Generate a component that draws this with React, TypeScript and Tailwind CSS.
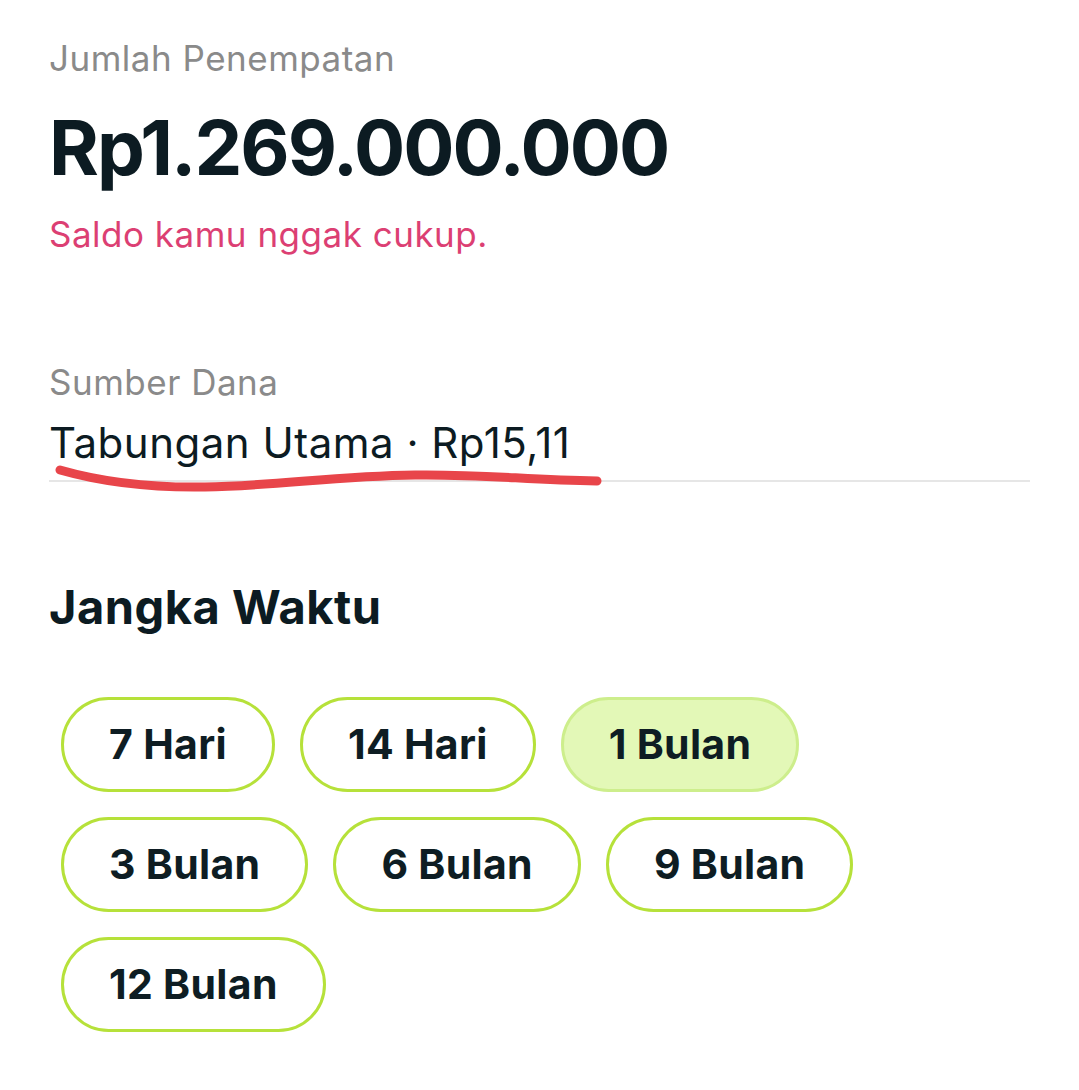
const durations = ['7 Hari', '14 Hari', '1 Bulan', '3 Bulan', '6 Bulan', '9 Bulan', '12 Bulan'];

const Pill = ({ label, active }: { label: string; active?: boolean }) => (
	<button
		className={
			active
				? 'h-[95px] rounded-full border-[3px] border-[#cdee8c] bg-[#e3f8b7] px-[45px] text-[41px] font-bold tracking-[0.3px] text-[#0e1d23]'
				: 'h-[95px] rounded-full border-[3px] border-[#b6e13a] bg-white px-[45px] text-[41px] font-bold tracking-[0.3px] text-[#0e1d23]'
		}>
		{label}
	</button>
);

export default function App() {
	return (
		<div
			className="min-h-[1090px] w-[1079px] bg-white px-[49px] pt-[36px]"
			style={{ fontFamily: 'Inter, "Noto Sans", sans-serif' }}>
			<div className="text-[35px] leading-[44px] tracking-[0.5px] text-[#8a8a8a]">Jumlah Penempatan</div>
			<div className="mt-[22px] text-[76px] font-bold leading-[90px] tracking-[-2px] text-[#0c1b22]">
				Rp1.269.000.000
			</div>
			<div className="mt-[20px] text-[35px] leading-[44px] tracking-[0.5px] text-[#dc3f73]">
				Saldo kamu nggak cukup.
			</div>

			<div className="mt-[104px] text-[35px] leading-[44px] tracking-[0.5px] text-[#8a8a8a]">Sumber Dana</div>
			<div className="relative mt-[14px] border-b-2 border-[#e6e6e6] pb-[12px]">
				<div className="text-[42px] leading-[50px] tracking-[0.5px] text-[#0c1b22]">Tabungan Utama · Rp15,11</div>
				{/* hand-drawn underline */}
				<svg className="absolute left-[6px] top-[44px]" width="548" height="30" viewBox="0 0 548 30">
					<path
						d="M5 8 C 40 18, 90 26, 150 25 C 220 24, 280 14, 360 13 C 430 12, 470 18, 542 19"
						fill="none"
						stroke="#e8454a"
						strokeWidth="9"
						strokeLinecap="round"
					/>
				</svg>
			</div>

			<div className="mt-[97px] text-[47px] font-bold leading-[56px] tracking-[0.5px] text-[#0c1b22]">
				Jangka Waktu
			</div>

			<div className="mt-[62px] flex max-w-[830px] flex-wrap gap-x-[25px] gap-y-[25px] pl-[12px]">
				{durations.map((d) => (
					<Pill key={d} label={d} active={d === '1 Bulan'} />
				))}
			</div>
		</div>
	);
}
